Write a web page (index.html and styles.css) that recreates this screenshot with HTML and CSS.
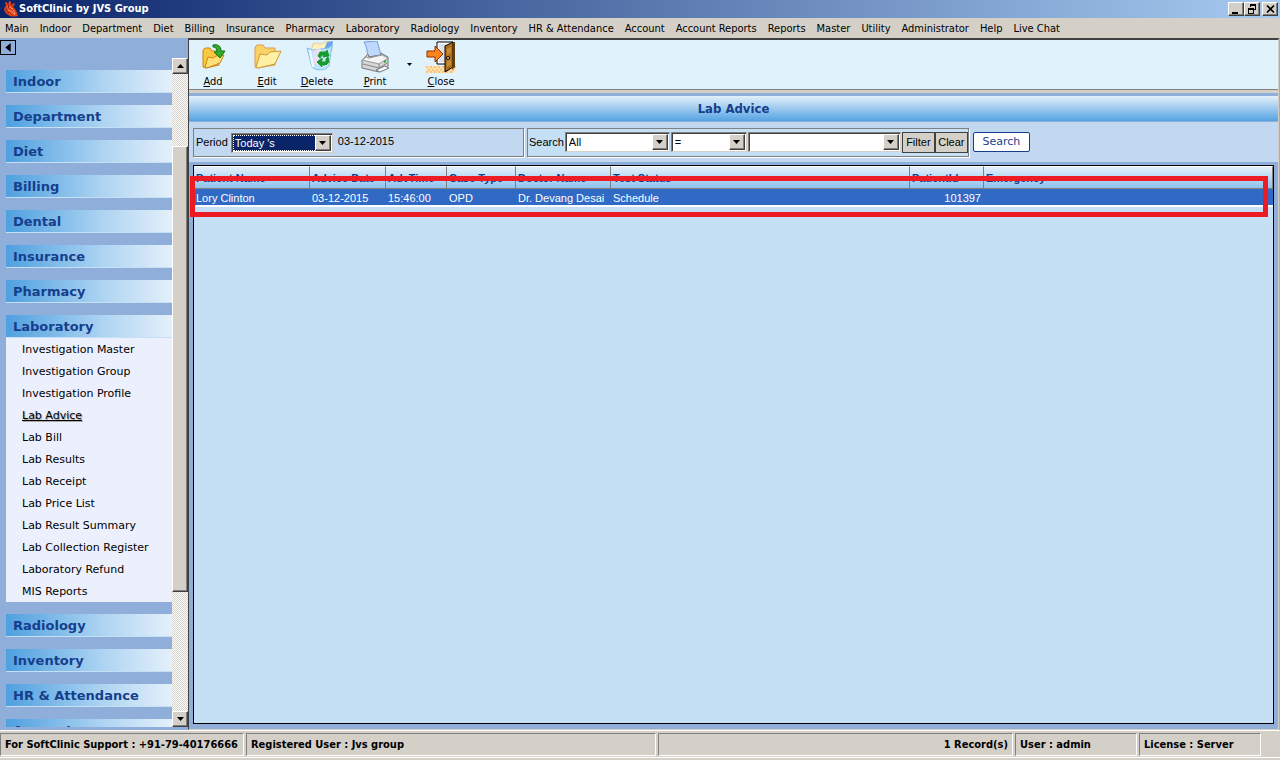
FILE: index.html
```html
<!DOCTYPE html>
<html lang="en">
<head>
<meta charset="utf-8">
<title>SoftClinic by JVS Group</title>
<link rel="stylesheet" href="styles.css">
</head>
<body>
<header class="titlebar">
  <svg class="logo" viewBox="0 0 16 16" aria-hidden="true">
    <path d="M4 5 3 1.500 5 1l1 3 1-4 2 .5L9 4l3-2 1 1-2 3c3 2 4 5 5 9-4 1-8 1-11-2C2 11 1 7 4 5z" fill="#d8401c"/>
    <path d="M5 6c2-1 4 0 5 2M5 9c3 0 5 2 8 5M10 7c1 2 2 3 3 6" stroke="#ff9a6a" fill="none"/>
    <path d="M7 4 6 7M4 8l3 4" stroke="#8c1c10" fill="none"/>
  </svg>
  <h1 class="app-title">SoftClinic by JVS Group</h1>
  <div class="window-buttons">
    <button class="win-btn" aria-label="Minimize"><svg viewBox="0 0 12 10"><path d="M2 8h6v2H2z"/></svg></button>
    <button class="win-btn" aria-label="Restore"><svg viewBox="0 0 12 10"><path d="M4 0h6v6H8V5h1V2H5v1H4zM2 4h6v6H2zm1 2v3h4V6z" fill-rule="evenodd"/></svg></button>
    <button class="win-btn win-close" aria-label="Close window"><svg viewBox="0 0 12 10"><path d="m3 1.500 7 7m0-7-7 7" stroke="#000" stroke-width="1.700"/></svg></button>
  </div>
</header>
<nav class="menubar" aria-label="Main menu">
  <button>Main</button><button>Indoor</button><button>Department</button><button>Diet</button><button>Billing</button><button>Insurance</button><button>Pharmacy</button><button>Laboratory</button><button>Radiology</button><button>Inventory</button><button>HR &amp; Attendance</button><button>Account</button><button>Account Reports</button><button>Reports</button><button>Master</button><button>Utility</button><button>Administrator</button><button>Help</button><button>Live Chat</button>
</nav>
<div class="workspace">
  <aside class="sidebar">
    <button class="collapse" aria-label="Collapse sidebar"><svg viewBox="0 0 6 10"><path d="M6 0v10L0 5z"/></svg></button>
    <div class="side-body">
      <nav class="side-nav" aria-label="Modules">
        <button class="module">Indoor</button>
        <button class="module">Department</button>
        <button class="module">Diet</button>
        <button class="module">Billing</button>
        <button class="module">Dental</button>
        <button class="module">Insurance</button>
        <button class="module">Pharmacy</button>
        <div class="module-open">
          <button class="module">Laboratory</button>
          <ul class="sub">
            <li><a href="#">Investigation Master</a></li>
            <li><a href="#">Investigation Group</a></li>
            <li><a href="#">Investigation Profile</a></li>
            <li><a href="#" class="current">Lab Advice</a></li>
            <li><a href="#">Lab Bill</a></li>
            <li><a href="#">Lab Results</a></li>
            <li><a href="#">Lab Receipt</a></li>
            <li><a href="#">Lab Price List</a></li>
            <li><a href="#">Lab Result Summary</a></li>
            <li><a href="#">Lab Collection Register</a></li>
            <li><a href="#">Laboratory Refund</a></li>
            <li><a href="#">MIS Reports</a></li>
          </ul>
        </div>
        <button class="module">Radiology</button>
        <button class="module">Inventory</button>
        <button class="module">HR &amp; Attendance</button>
        <button class="module">Account</button>
      </nav>
      <div class="scrollbar">
        <button class="scroll-btn" aria-label="Scroll up"><svg viewBox="0 0 7 4"><path d="M0 4h7L3.500 0z"/></svg></button>
        <div class="track-top"></div>
        <div class="thumb"></div>
        <div class="track-bottom"></div>
        <button class="scroll-btn" aria-label="Scroll down"><svg viewBox="0 0 7 4"><path d="M0 0h7L3.500 4z"/></svg></button>
      </div>
    </div>
  </aside>
  <main class="content">
    <div class="toolbar" role="toolbar">
      <button class="tool tool-add">
        <svg viewBox="0 0 32 32">
          <path d="M6 9l2-2h5l2 3h7v14l-13 3-3-1z" fill="#fbc93e" stroke="#c98516"/>
          <path d="M11 16l5 1 3-2 8-1-4 8-13 5-2-1z" fill="#ffe17a" stroke="#c98516"/>
          <path d="M16 4c5-1 8 1 8 6h4l-5 7-6-6h3c0-3-1-5-4-5z" fill="#2fae2b" stroke="#157016"/>
        </svg>
        <span><u>A</u>dd</span>
      </button>
      <button class="tool tool-edit">
        <svg viewBox="0 0 32 32">
          <path d="M4 6l2-2h6l2 3h10v17l-18 3-2-1z" fill="#fbd266" stroke="#dc9a5c"/>
          <path d="M9 13l7 1 3-3 11-1-6 13-17 4-2-1z" fill="#fff0a4" stroke="#cf9a34"/>
        </svg>
        <span><u>E</u>dit</span>
      </button>
      <button class="tool tool-delete">
        <svg viewBox="0 0 32 32">
          <path d="M12 3l4-1 4 1 6-3 4 1-1 9H10z" fill="#fff1bd" stroke="#e6cd94"/>
          <path d="M26 1l6-1-1 9-3 5-6-3z" fill="#6ea6ee"/>
          <path d="M6 7l6 2 16-2 3-3-3 21c-4 5-13 5-17 1z" fill="#c2e4fb" stroke="#84c0ec"/>
          <path d="M12 10l7-3 2 7-4 8-4 2z" fill="#e8dff5"/><path d="M9 9l3 17" stroke="#f7fcff" stroke-width="2"/>
          <path d="M17 15l2-4h6l1-2 2 6-6 1 1-2h-2l-2 3zM27 16l1 5-3 3-2-2 2-2v-2zM24 24h-4l1 2-5-5 5-4v3l-1 1h4z" fill="#169b2c" stroke="#169b2c"/>
        </svg>
        <span><u>D</u>elete</span>
      </button>
      <button class="tool tool-print">
        <svg viewBox="0 0 32 32">
          <path d="M5 1l13-1 4 14-13 2C8 10 8 6 5 1z" fill="#bfd8fb" stroke="#739be4"/>
          <path d="M3 19l6-6 1 3 12-2v-2l7 4v9l-9 6L3 27z" fill="#d6d6d6" stroke="#777"/>
          <path d="M3 19l17 4 9-6-6-3-13 3-3-1z" fill="#f4f4f4" stroke="#999"/>
          <path d="M4 23l16 4 8-5M20 23v7" stroke="#888" fill="none"/>
          <path d="M17 29l9-4 4 2-9 4z" fill="#f5faff" stroke="#777"/><path d="M25 21l2-1" stroke="#29b439" stroke-width="2"/>
        </svg>
        <span><u>P</u>rint</span>
      </button>
      <button class="tool-arrow" aria-label="Print options"><svg viewBox="0 0 5 3"><path d="M0 0h5L2.500 3z"/></svg></button>
      <button class="tool tool-close">
        <svg viewBox="0 0 32 32">
          <path d="M0 25h32l-3 7H2z" fill="#ffe0ad"/><path d="M1 26h30M3 29h26M1 31h26" stroke="#f5a550" stroke-dasharray="2 2"/>
          <path d="M12 1h16v22H12z" fill="#fff" stroke="#000"/>
          <path d="M14 3h8v18h-8z" fill="#dde1e9"/>
          <path d="M20 5l8-4v25l-8 5z" fill="#ad6d19" stroke="#000"/>
          <path d="M28 1h2v25l-3 3z" fill="#61400e"/><path d="M22 8l4-2v6l-4 2zM22 20l4-2v6l-4 2z" fill="#c98a30"/>
          <circle cx="23" cy="17" r="1.500" fill="#ffe0a0" stroke="#000"/>
          <path d="M2 10h8V5l8 8-8 8v-5H2z" fill="#ff861f" stroke="#8f2e00"/>
        </svg>
        <span><u>C</u>lose</span>
      </button>
    </div>
    <h2 class="page-title">Lab Advice</h2>
    <form class="filters">
      <div class="box period">
        <label for="period">Period</label>
        <div class="combo combo-period">
          <select id="period"><option>Today 's</option></select>
          <span class="drop"><svg viewBox="0 0 7 4"><path d="M0 0h7L3.500 4z"/></svg></span>
        </div>
        <span class="date">03-12-2015</span>
      </div>
      <div class="box search">
        <label for="field">Search</label>
        <div class="combo combo-field">
          <select id="field"><option>All</option></select>
          <span class="drop"><svg viewBox="0 0 7 4"><path d="M0 0h7L3.500 4z"/></svg></span>
        </div>
        <div class="combo combo-op">
          <select aria-label="Operator"><option>=</option></select>
          <span class="drop"><svg viewBox="0 0 7 4"><path d="M0 0h7L3.500 4z"/></svg></span>
        </div>
        <div class="combo combo-value">
          <select aria-label="Value"><option></option></select>
          <span class="drop"><svg viewBox="0 0 7 4"><path d="M0 0h7L3.500 4z"/></svg></span>
        </div>
        <div class="pair">
          <button type="button" class="flat">Filter</button>
          <button type="button" class="flat">Clear</button>
        </div>
      </div>
      <button type="button" class="search-btn">Search</button>
    </form>
    <div class="grid-area">
      <div class="grid">
        <table>
          <colgroup><col class="c-name"><col class="c-date"><col class="c-time"><col class="c-case"><col class="c-doctor"><col class="c-status"><col class="c-id"><col></colgroup>
          <thead><tr><th>Patient Name</th><th>Advice Date</th><th>AdvTime</th><th>Case Type</th><th>Doctor Name</th><th>Test Status</th><th>PatientId</th><th>Emergency</th></tr></thead>
          <tbody><tr><td>Lory Clinton</td><td>03-12-2015</td><td>15:46:00</td><td>OPD</td><td>Dr. Devang Desai</td><td>Schedule</td><td class="num">101397</td><td></td></tr></tbody>
        </table>
        <div class="marker"></div>
      </div>
    </div>
  </main>
</div>
<footer class="statusbar">
  <div class="pane pane-support">For SoftClinic Support : +91-79-40176666</div>
  <div class="pane pane-reg">Registered User : Jvs group</div>
  <div class="pane pane-records">1 Record(s)</div>
  <div class="pane pane-user">User : admin</div>
  <div class="pane pane-user">License : Server</div>
</footer>
</body>
</html>
```

FILE: styles.css
```css
* { box-sizing: border-box; }
body {
  margin: 0;
  height: 100vh;
  display: flex;
  flex-direction: column;
  overflow: hidden;
  background: #d4d0c8;
  color: #000;
  font: 11px/14px "DejaVu Sans Condensed", "DejaVu Sans", sans-serif;
}
button, select { font: inherit; color: inherit; border-radius: 0; margin: 0; padding: 0; }
button { border: 0; background: none; white-space: nowrap; }
svg { display: block; }

.titlebar {
  display: flex;
  align-items: center;
  height: 18px;
  padding: 0 2px;
  background: linear-gradient(90deg, #0a246a, #a6caf0);
}
.logo { width: 16px; height: 16px; }
.app-title { flex: 1; margin: 0 0 0 1px; font-size: 11px; line-height: 18px; font-weight: bold; color: #fff; }
.window-buttons { display: flex; }
.win-btn {
  width: 16px;
  height: 14px;
  padding: 1px;
  background: #d4d0c8;
  border: 1px solid;
  border-color: #fff #404040 #404040 #fff;
  box-shadow: inset -1px -1px #808080;
}
.win-btn svg { width: 12px; height: 10px; }
.win-close { margin-left: 2px; }

.menubar { display: flex; align-items: center; gap: 11px; height: 20px; padding: 1px 5px 0; }

.workspace { flex: 1; min-height: 0; display: flex; background: #8fafda; }
.sidebar { width: 188px; display: flex; flex-direction: column; }
.collapse { width: 16px; height: 15px; margin: 2px 0 3px; padding: 2px 4px; border: 1px solid #000; }
.collapse svg { width: 6px; height: 9px; }
.side-body { flex: 1; min-height: 0; display: flex; margin-bottom: 3px; }
.side-nav { flex: 1; min-height: 0; display: flex; flex-direction: column; gap: 12px; padding: 12px 0 0 6px; overflow: hidden; }
.module {
  flex: none;
  width: 100%;
  height: 23px;
  padding: 1px 7px 0;
  text-align: left;
  font: bold 13px/22px "DejaVu Sans", sans-serif;
  color: #153f8c;
  background: linear-gradient(90deg, #4fa0e0, #b0d5f2 60%, #e4f0fa);
  border-bottom: 1px solid #c5dff5;
}
.module-open { flex: none; }
.sub { list-style: none; margin: 0; padding: 0 0 0 16px; background: #ecf0fc; font: 11px/24px "DejaVu Sans", sans-serif; }
.sub li { height: 22px; }
.sub a { color: #000; text-decoration: none; }
.sub .current { text-decoration: underline; text-shadow: 1px 1px #aaa; }
.scrollbar { width: 16px; display: flex; flex-direction: column; background: repeating-conic-gradient(#fff 0 25%, #d4d0c8 0 50%) 0 0 / 2px 2px; }
.scroll-btn, .thumb, .drop {
  background: #d4d0c8;
  border: 1px solid;
  border-color: #fff #404040 #404040 #fff;
  box-shadow: inset -1px -1px #808080;
}
.scroll-btn { height: 16px; flex: none; display: grid; place-items: center; }
.scroll-btn svg, .drop svg { width: 7px; height: 4px; }
.track-top { flex: 72; }
.thumb { flex: 446; }
.track-bottom { flex: 120; }

.content {
  flex: 1;
  min-width: 0;
  display: flex;
  flex-direction: column;
  border-top: 2px solid #404040;
  border-left: 1px solid #404040;
  border-right: 1px solid #d4d0c8;
  border-bottom: 1px solid #d4d0c8;
  margin-right: 1px;
}
.toolbar {
  display: flex;
  gap: 4px;
  background: #e0f3fd;
  border-bottom: 1px solid #808080;
  box-shadow: 0 3px #d4d0c8;
  height: 50px;
}
.tool { width: 48px; display: flex; flex-direction: column; align-items: center; gap: 2px; padding-top: 1px; }
.tool svg { flex: none; width: 32px; height: 32px; }
.tool span { line-height: 14px; }
.tool-edit { width: 52px; }
.tool-delete { width: 40px; }
.tool-print { width: 52px; margin-left: 8px; }
.tool-arrow { width: 8px; display: grid; place-items: center; }
.tool-arrow svg { width: 5px; height: 3px; }
.page-title {
  margin: 6px 0 0;
  height: 25px;
  text-align: center;
  font: bold 13px/26px "DejaVu Sans Condensed", sans-serif;
  color: #153f8c;
  background: linear-gradient(#e4f0fb, #55a3e3);
}
.filters {
  display: flex;
  gap: 3px;
  align-items: center;
  padding: 3px 4px;
  height: 40px;
  margin-top: 1px;
  background: #c2d8f0;
  font: 11px/14px "Liberation Sans", Arial, sans-serif;
}
.box { display: flex; align-items: center; height: 29px; border: 1px solid #808080; box-shadow: 1px 1px #fff; }
.period { width: 331px; padding-left: 2px; }
.combo { position: relative; height: 20px; background: #fff; border: 1px solid; border-color: #808080 #d4d0c8 #d4d0c8 #808080; box-shadow: inset 1px 1px #404040; padding: 1px; }
.combo select { appearance: none; width: 100%; height: 16px; border: 0; padding: 0 2px; background: #fff; outline: 0; }
.drop { position: absolute; top: 1px; right: 1px; bottom: 1px; width: 16px; display: grid; place-items: center; pointer-events: none; }
.combo-period { width: 102px; margin: 2px 5px 0 3px; }
.combo-period select { background: #0a246a; color: #fff; outline: 1px dotted #fff; outline-offset: -1px; }
.date { padding-bottom: 2px; }
.search { background: #c5dff5; padding-left: 1px; gap: 1px; }
.combo-field { width: 105px; }
.combo-op { width: 76px; }
.combo-value { width: 153px; }
.pair { display: flex; }
.flat { width: 33px; height: 21px; background: #d4d0c8; border: 1px solid #404040; }
.search-btn { width: 57px; height: 20px; margin-left: 1px; border: 1px solid #153f8c; border-radius: 2px; background: #fff; color: #153f8c; font: 11px/14px "DejaVu Sans", sans-serif; }

.grid-area { flex: 1; min-height: 0; display: flex; padding: 3px 4px 5px; }
.grid { position: relative; flex: 1; background: #c5dff4; border: 1px solid #000; }
table { width: 100%; table-layout: fixed; border-collapse: separate; border-spacing: 0; font: 11px/14px "Liberation Sans", Arial, sans-serif; }
.c-name { width: 116px; }
.c-date { width: 76px; }
.c-time { width: 61px; }
.c-case { width: 69px; }
.c-doctor { width: 95px; }
.c-status { width: 299px; }
.c-id { width: 74px; }
th, td { padding: 0 2px; text-align: left; white-space: nowrap; overflow: hidden; }
th { height: 23px; color: #153f8c; background: linear-gradient(#e4f0fb, #8fc2ee); border-right: 1px solid #808080; border-bottom: 1px solid #808080; border-top: 1px solid #fff; }
td { height: 18px; padding-top: 1px; color: #fff; background: #316ac5; border-bottom: 2px solid #fff; }
.num { text-align: right; padding-right: 3px; }
.marker { position: absolute; left: -4px; right: 5px; top: 10px; height: 41px; border: 5px solid #ed1c24; }

.statusbar { display: flex; gap: 2px; padding: 2px 19px 2px 0; border-top: 1px solid #fff; font-weight: bold; box-shadow: inset 0 -2px #d4d0c8, inset 0 -3px #fff; height: 30px; }
.pane { height: 23px; padding: 0 4px; line-height: 22px; border: 1px solid; border-color: #808080 #fff #fff #808080; white-space: nowrap; overflow: hidden; }
.pane-support { width: 244px; }
.pane-reg { flex: 411 0 0; }
.pane-records { flex: 354 0 0; text-align: right; }
.pane-user { width: 122px; }
```
